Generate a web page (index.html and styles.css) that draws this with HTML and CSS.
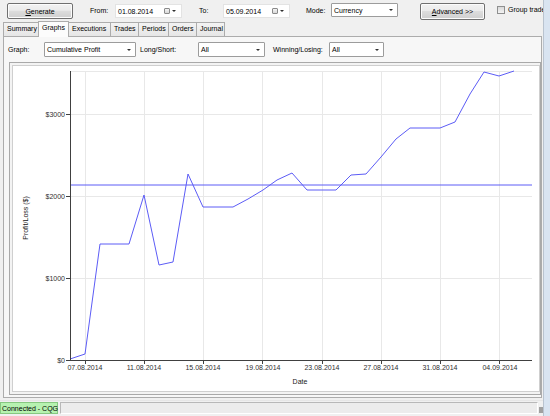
FILE: index.html
```html
<!DOCTYPE html>
<html>
<head>
<meta charset="utf-8">
<link rel="stylesheet" href="styles.css">
</head>
<body>
<div class="window">
  <div class="toolbar">
    <button class="btn btn-generate"><u>G</u>enerate</button>
    <span class="lbl lbl-from">From:</span>
    <div class="date"><span class="date-text">01.08.2014</span><span class="cal"></span><span class="dd"></span></div>
    <span class="lbl lbl-to">To:</span>
    <div class="date"><span class="date-text">05.09.2014</span><span class="cal"></span><span class="dd"></span></div>
    <span class="lbl lbl-mode">Mode:</span>
    <div class="select select-mode"><span class="sel-text">Currency</span><span class="dd"></span></div>
    <button class="btn btn-adv"><u>A</u>dvanced &gt;&gt;</button>
    <div class="check"><span class="box"></span><span class="check-text">Group trades</span></div>
  </div>
  <div class="tabs">
    <div class="tab t-summary">Summary</div>
    <div class="tab tab-active t-graphs">Graphs</div>
    <div class="tab t-exec">Executions</div>
    <div class="tab t-trades">Trades</div>
    <div class="tab t-periods">Periods</div>
    <div class="tab t-orders">Orders</div>
    <div class="tab t-journal">Journal</div>
  </div>
  <div class="tabpage">
    <div class="filters">
      <span class="lbl lbl-graph">Graph:</span>
      <div class="select sel-graph"><span class="sel-text">Cumulative Profit</span><span class="dd"></span></div>
      <span class="lbl lbl-ls">Long/Short:</span>
      <div class="select sel-ls"><span class="sel-text">All</span><span class="dd"></span></div>
      <span class="lbl lbl-wl">Winning/Losing:</span>
      <div class="select sel-wl"><span class="sel-text">All</span><span class="dd"></span></div>
    </div>
    <div class="chart-frame">
      <div class="chart">
        <svg class="plot" width="526" height="325" viewBox="10 66 526 325" xmlns="http://www.w3.org/2000/svg">
          <g stroke="#e8e8e8" stroke-width="1">
            <line x1="67" y1="71.5" x2="529" y2="71.5"/>
            <line x1="67" y1="114.5" x2="529" y2="114.5"/>
            <line x1="67" y1="196.5" x2="529" y2="196.5"/>
            <line x1="67" y1="278.5" x2="529" y2="278.5"/>
            <line x1="82.5" y1="71" x2="82.5" y2="360"/>
            <line x1="141.5" y1="71" x2="141.5" y2="360"/>
            <line x1="200.5" y1="71" x2="200.5" y2="360"/>
            <line x1="259.5" y1="71" x2="259.5" y2="360"/>
            <line x1="319.5" y1="71" x2="319.5" y2="360"/>
            <line x1="378.5" y1="71" x2="378.5" y2="360"/>
            <line x1="437.5" y1="71" x2="437.5" y2="360"/>
            <line x1="496.5" y1="71" x2="496.5" y2="360"/>
          </g>
          <polyline class="series" points="68,185 529,185"/>
          <polyline class="series" points="67,359 82,354 97,244 112,244 126,244 141,195 156,265 170,262 185,174 200,207 215,207 230,207 245,199 260,190 274,180 289,173 304,190 319,190 333,190 348,175 363,174 378,157 393,139 407,128 422,128 437,128 452,122 467,94 481,72 496,76 511,71"/>
          <g stroke="#404040" stroke-width="1">
            <line x1="67.5" y1="71" x2="67.5" y2="360.5"/>
            <line x1="67" y1="360.5" x2="529" y2="360.5"/>
            <line x1="63" y1="114.5" x2="67" y2="114.5"/>
            <line x1="63" y1="196.5" x2="67" y2="196.5"/>
            <line x1="63" y1="278.5" x2="67" y2="278.5"/>
            <line x1="63" y1="360.5" x2="67" y2="360.5"/>
            <line x1="82.5" y1="360" x2="82.5" y2="364"/>
            <line x1="141.5" y1="360" x2="141.5" y2="364"/>
            <line x1="200.5" y1="360" x2="200.5" y2="364"/>
            <line x1="259.5" y1="360" x2="259.5" y2="364"/>
            <line x1="319.5" y1="360" x2="319.5" y2="364"/>
            <line x1="378.5" y1="360" x2="378.5" y2="364"/>
            <line x1="437.5" y1="360" x2="437.5" y2="364"/>
            <line x1="496.5" y1="360" x2="496.5" y2="364"/>
          </g>
          <g class="ylab" text-anchor="end">
            <text x="62" y="117">$3000</text>
            <text x="62" y="199">$2000</text>
            <text x="62" y="281">$1000</text>
            <text x="62" y="363">$0</text>
          </g>
          <g class="xlab" text-anchor="middle">
            <text x="82" y="370">07.08.2014</text>
            <text x="141" y="370">11.08.2014</text>
            <text x="200" y="370">15.08.2014</text>
            <text x="260" y="370">19.08.2014</text>
            <text x="319" y="370">23.08.2014</text>
            <text x="378" y="370">27.08.2014</text>
            <text x="437" y="370">31.08.2014</text>
            <text x="497" y="370">04.09.2014</text>
          </g>
          <text class="axis-title" x="297" y="384" text-anchor="middle">Date</text>
          <text class="axis-title" x="0" y="0" text-anchor="middle" transform="translate(25,218) rotate(-90)">Profit/Loss ($)</text>
        </svg>
      </div>
    </div>
  </div>
  <div class="statusbar">
    <div class="status-conn">Connected - CQG</div>
    <div class="status-panel"></div>
    <div class="grip"></div>
  </div>
</div>
</body>
</html>
```

FILE: styles.css
```css
* { box-sizing: border-box; }
html, body { margin: 0; padding: 0; }
body {
  width: 550px;
  height: 416px;
  overflow: hidden;
  background: #d9e4f1;
  font-family: "Liberation Sans", Arial, sans-serif;
  font-size: 7px;
  color: #000;
}
.window {
  width: 544px;
  height: 416px;
  background: #f0f0f0;
  border-right: 1px solid #b9c3cf;
  overflow: hidden;
}
.toolbar {
  height: 21px;
  display: flex;
  align-items: flex-start;
  padding-top: 3px;
  white-space: nowrap;
}
.toolbar > *, .filters > *, .tabs > *, .statusbar > * { flex-shrink: 0; }
.btn {
  font-family: inherit;
  font-size: 7px;
  height: 16px;
  padding: 0;
  margin: 0;
  border: 1px solid #707070;
  border-radius: 2px;
  background: linear-gradient(#f2f2f2 0%, #ebebeb 45%, #dddddd 50%, #cfcfcf 100%);
  color: #000;
  box-shadow: inset 0 0 0 1px #fcfcfc;
}
.btn-generate { margin-left: 7px; width: 66px; }
.btn-adv { margin-left: 22px; width: 65px; height: 17px; }
.lbl { line-height: 14px; display: inline-block; }
.toolbar .lbl { margin-top: 1px; }
.lbl-from { margin-left: 17px; width: 25px; }
.lbl-to { margin-left: 17px; width: 24px; }
.lbl-mode { margin-left: 16px; width: 25px; }
.date {
  width: 67px;
  height: 14px;
  margin-top: 1px;
  background: #fff;
  border: 1px solid #e3e3e3;
  display: flex;
  align-items: center;
  padding-left: 2px;
}
.date-text { flex: 1; }
.cal {
  width: 6px;
  height: 6px;
  border: 1px solid #8a8a8a;
  border-radius: 1px;
  background: linear-gradient(#f4f4f4, #d8d8d8);
}
.dd {
  width: 0;
  height: 0;
  border-left: 2px solid transparent;
  border-right: 2px solid transparent;
  border-top: 2px solid #303030;
  margin-left: 2px;
  margin-right: 5px;
}
.select {
  height: 14px;
  background: #fff;
  border: 1px solid #9c9c9c;
  border-radius: 1px;
  display: flex;
  align-items: center;
  padding-left: 2px;
}
.select .dd { margin-right: 4px; }
.sel-text { flex: 1; }
.select-mode { width: 67px; }
.check {
  margin-left: 12px;
  margin-top: 2px;
  display: flex;
  align-items: center;
  height: 9px;
}
.box {
  width: 8px;
  height: 8px;
  border: 1px solid #8e8f8f;
  background: linear-gradient(#d9d9d9, #f3f3f3);
  margin-right: 3px;
}
.tabs {
  display: flex;
  align-items: flex-end;
  height: 15px;
  padding-left: 3px;
  position: relative;
  z-index: 1;
}
.tab {
  height: 14px;
  line-height: 12px;
  border: 1px solid #acacac;
  border-bottom: none;
  border-right: none;
  background: linear-gradient(#f3f3f3, #e6e6e6);
  padding-left: 3px;
  white-space: nowrap;
  overflow: hidden;
}
.t-journal { border-right: 1px solid #acacac; }
.tab-active {
  height: 16px;
  background: #fcfcfc;
  border-right: 1px solid #acacac;
  margin-bottom: -1px;
}
.tab-active + .tab { border-left: none; }
.t-summary { width: 35px; }
.t-graphs { width: 31px; }
.t-exec { width: 41px; }
.t-trades { width: 28px; }
.t-periods { width: 30px; }
.t-orders { width: 28px; }
.t-journal { width: 29px; }
.tabpage {
  margin-left: 3px;
  width: 539px;
  height: 362px;
  border: 1px solid #acacac;
  background: #f7f7f7;
  padding: 5px 0 0 4px;
}
.filters {
  display: flex;
  align-items: center;
  height: 15px;
  white-space: nowrap;
}
.filters .select { height: 15px; }
.lbl-graph { width: 36px; }
.sel-graph { width: 92px; }
.lbl-ls { margin-left: 4px; width: 58px; }
.sel-ls { width: 67px; }
.lbl-wl { margin-left: 8px; width: 56px; }
.sel-wl { width: 55px; }
.chart-frame {
  margin-top: 5px;
  margin-left: 1px;
  width: 532px;
  height: 333px;
  border: 1px solid #a9a9a9;
  padding: 2px;
  background: #f3f3f3;
}
.chart {
  width: 528px;
  height: 327px;
  border: 1px solid #cfcfcf;
  background: #fff;
}
.plot { display: block; }
.series {
  fill: none;
  stroke: #5c5cf6;
  stroke-width: 1;
}
.plot text {
  font-family: "Liberation Sans", Arial, sans-serif;
  font-size: 7px;
}
.ylab, .xlab { fill: #303030; }
.axis-title { fill: #202020; }
.statusbar {
  margin-top: 2px;
  height: 16px;
  display: flex;
  align-items: flex-start;
  padding-top: 1px;
  border-top: 1px solid #e6e6e6;
}
.status-conn {
  width: 58px;
  height: 12px;
  line-height: 11px;
  background: #b6f2b0;
  border: 1px solid #86c880;
  padding-left: 1px;
  white-space: nowrap;
}
.status-panel {
  margin-left: 2px;
  width: 478px;
  height: 12px;
  border: 1px solid #b8b8b8;
  border-right-color: #fff;
  border-bottom-color: #fff;
  background: #ececec;
}
.grip {
  margin-left: 1px;
  margin-top: 5px;
  width: 5px;
  height: 6px;
  background-image: radial-gradient(circle, #9a9a9a 0.7px, transparent 0.8px);
  background-size: 2px 2px;
}
```
